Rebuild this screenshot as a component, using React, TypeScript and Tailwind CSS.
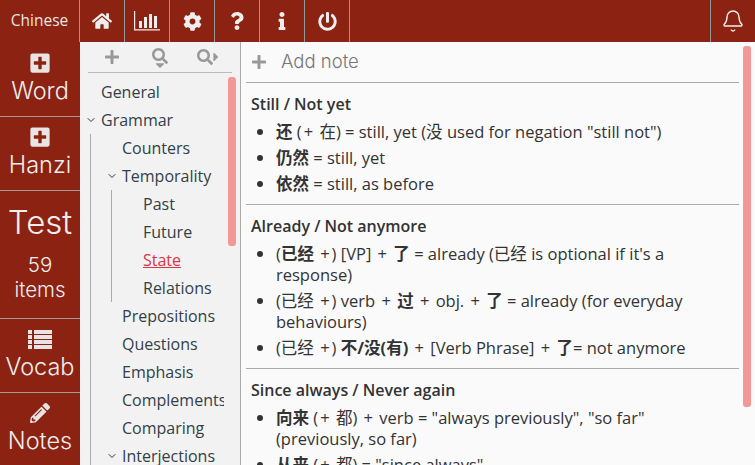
import { FaHome, FaCog, FaQuestion, FaInfo, FaPowerOff, FaPlus, FaPlusSquare, FaPencilAlt, FaSearch, FaCaretDown, FaCaretRight } from 'react-icons/fa';
import { ChevronDown, Bell } from 'lucide-react';
import type { ReactNode } from 'react';

const TITLE = 'font-["Inter","Lato",sans-serif] font-light';

function ChartIcon() {
  return (
    <svg viewBox="0 0 26 20" className="w-[26px] h-5" fill="#eee">
      <path d="M0 0h1.2v18.3H26v1.2H0z" />
      <rect x="5" y="10" width="3" height="7" />
      <rect x="10" y="6" width="3" height="11" />
      <rect x="15" y="3" width="3" height="14" />
      <rect x="20" y="5" width="3" height="12" />
    </svg>
  );
}

function ListIcon() {
  return (
    <svg viewBox="0 0 24 20" className="w-6 h-5" fill="#e8e4e4">
      <path d="M0 1h4v4H0zM6 1h18v4H6zM0 6h4v4H0zM6 6h18v4H6zM0 11h4v4H0zM6 11h18v4H6zM0 16h4v4H0zM6 16h18v4H6z" />
    </svg>
  );
}

// the plus signs sit a little wider apart than a plain space gives
function P() {
  return <span className="mx-[2px]">+</span>;
}

function TopCell({ children }: { children: ReactNode }) {
  return (
    <div className="w-[45px] h-full flex items-center justify-center border-r border-[#8f9a9a] text-[#eeeeee] shrink-0">
      {children}
    </div>
  );
}

function SideButton({ icon, label }: { icon: ReactNode; label: string }) {
  return (
    <div className="h-[74px] shrink-0 flex flex-col items-center border-b border-[#a89a94] pt-[7px]">
      <div className="h-[25px] flex items-center text-[#e8e4e4]">{icon}</div>
      <div className={`${TITLE} text-[23.5px] leading-[30px] mt-px text-[#eee]`}>{label}</div>
    </div>
  );
}

function TreeRow({ label, depth, open, active }: { label: string; depth: number; open?: boolean; active?: boolean }) {
  return (
    <div
      className={`h-7 flex items-center relative whitespace-nowrap ${depth === 0 ? 'pl-[21px]' : depth === 1 ? 'pl-[42px]' : 'pl-[63px]'}`}
    >
      {open && (
        <ChevronDown
          className={`absolute w-3 h-3 text-[#333] ${depth === 0 ? 'left-[5px]' : 'left-[26px]'}`}
          strokeWidth={2}
        />
      )}
      <span className={active ? 'text-[#dc3545] underline' : ''}>{label}</span>
    </div>
  );
}

function TreePanel() {
  return (
    <div className="w-[161px] shrink-0 bg-[#f2f2f2] border-r border-[#a9a9a9] relative overflow-hidden font-['Open_Sans',sans-serif] text-[16px] text-[#343f47]">
      <div className="mx-2 h-[31px] flex items-center border-b border-[#bbb] text-[#999] text-[16px]">
        <div className="w-12 flex justify-center"><FaPlus /></div>
        <div className="w-12 flex flex-col items-center leading-none pt-[6px]">
          <FaSearch className="w-4 h-4" />
          <FaCaretDown className="w-[14px] h-[14px] -mt-[6px]" />
        </div>
        <div className="w-12 flex items-center justify-center pl-1">
          <FaSearch className="w-4 h-4" />
          <FaCaretRight className="w-[14px] h-[14px] -ml-1" />
        </div>
      </div>
      <div className="pt-[5px]">
        <TreeRow label="General" depth={0} />
        <TreeRow label="Grammar" depth={0} open />
        <div className="ml-[10px] border-l border-[#aaa]">
          <div className="-ml-[11px]">
            <TreeRow label="Counters" depth={1} />
            <TreeRow label="Temporality" depth={1} open />
            <div className="ml-[31px] border-l border-[#aaa]">
              <div className="-ml-[32px]">
                <TreeRow label="Past" depth={2} />
                <TreeRow label="Future" depth={2} />
                <TreeRow label="State" depth={2} active />
                <TreeRow label="Relations" depth={2} />
              </div>
            </div>
            <TreeRow label="Prepositions" depth={1} />
            <TreeRow label="Questions" depth={1} />
            <TreeRow label="Emphasis" depth={1} />
            <div className="w-[144px] overflow-hidden">
              <TreeRow label="Complements" depth={1} />
            </div>
            <TreeRow label="Comparing" depth={1} />
            <TreeRow label="Interjections" depth={1} open />
          </div>
        </div>
      </div>
      <div className="absolute left-[148px] top-[35px] w-2 h-[169px] rounded-[3px] bg-[#f49797]" />
    </div>
  );
}

function Section({ title, items, last }: { title: string; items: ReactNode[]; last?: boolean }) {
  return (
    <div className={`mx-[5px] px-[5px] pt-[11px] ${last ? '' : 'pb-[10px] border-b border-[#aaa]'}`}>
      <div className="font-semibold text-[16px] leading-[21px] mb-[6px]">{title}</div>
      <ul className="list-disc pl-[25px] pr-[5px] flex flex-col gap-[5px] text-[16.5px]">
        {items.map((item, i) => (
          <li key={i} className="leading-[21px]">{item}</li>
        ))}
      </ul>
    </div>
  );
}

function NotesPanel() {
  return (
    <div className="flex-1 min-w-0 bg-[#fafafa] relative overflow-hidden font-['Open_Sans','Noto_Sans_CJK_SC',sans-serif] text-[16px] text-[#333]">
      <div className="ml-[5px] mr-[16px] h-[41px] flex items-center border-b border-[#aaa] text-[#777]">
        <FaPlus className="ml-[5px] w-4 h-4 text-[#999]" />
        <span className={`${TITLE} ml-[14px] text-[18.5px]`}>Add note</span>
      </div>
      <div className="mr-[11px]">
        <Section
          title="Still / Not yet"
          items={[
            <><b>还</b> (<P /> 在) = still, yet (没 used for negation "still not")</>,
            <><b>仍然</b> = still, yet</>,
            <><b>依然</b> = still, as before</>,
          ]}
        />
        <Section
          title="Already / Not anymore"
          items={[
            <>(<b>已经</b> <P />) [VP] <P /> <b>了</b> = already (已经 is optional if it's a response)</>,
            <>(已经 <P />) verb <P /> <b>过</b> <P /> obj. <P /> <b>了</b> = already (for everyday behaviours)</>,
            <>(已经 <P />) <b>不/没(有)</b> <P /> [Verb Phrase] <P /> <b>了</b>= not anymore</>,
          ]}
        />
        <Section
          title="Since always / Never again"
          last
          items={[
            <><b>向来</b> (<P /> 都) <P /> verb = "always previously", "so far" (previously, so far)</>,
            <><b>从来</b> (<P /> 都) = "since always"</>,
          ]}
        />
      </div>
      <div className="absolute right-[4px] top-[4px] w-2 h-[361px] rounded-[3px] bg-[#f49797]" />
    </div>
  );
}

export default function App() {
  return (
    <div className="w-[755px] h-[465px] flex flex-col overflow-hidden bg-[#8c2211]">
      <div className="h-[42px] shrink-0 flex items-stretch bg-[#8c2211]">
        <div className="w-[80px] flex items-center justify-center border-r border-[#8f9a9a] font-['Open_Sans',sans-serif] text-[#e8e4e4] text-[15.5px] shrink-0">
          Chinese
        </div>
        <TopCell><FaHome className="w-5 h-5" /></TopCell>
        <TopCell><ChartIcon /></TopCell>
        <TopCell><FaCog className="w-[19px] h-[19px]" /></TopCell>
        <TopCell><FaQuestion className="w-[14px] h-[18px]" /></TopCell>
        <TopCell><FaInfo className="w-[14px] h-[18px]" /></TopCell>
        <TopCell><FaPowerOff className="w-[19px] h-[19px]" /></TopCell>
        <div className="flex-1" />
        <div className="w-[45px] flex items-center justify-center border-l border-[#8f9a9a] text-[#eee]">
          <Bell className="w-6 h-6" strokeWidth={1.4} />
        </div>
      </div>
      <div className="flex-1 min-h-0 flex">
        <div className="w-[80px] shrink-0 flex flex-col overflow-hidden pt-px">
          <SideButton icon={<FaPlusSquare className="w-[22px] h-[22px]" />} label="Word" />
          <SideButton icon={<FaPlusSquare className="w-[22px] h-[22px]" />} label="Hanzi" />
          <div className="h-[128px] shrink-0 flex flex-col items-center border-b border-[#a89a94] text-[#eee]">
            <div className={`${TITLE} text-[33px] leading-[40px] mt-[11px]`}>Test</div>
            <div className={`${TITLE} text-[20.5px] leading-[25px] mt-[10px] text-center`}>59<br />items</div>
          </div>
          <SideButton icon={<ListIcon />} label="Vocab" />
          <SideButton icon={<FaPencilAlt className="w-5 h-5" />} label="Notes" />
        </div>
        <TreePanel />
        <NotesPanel />
      </div>
    </div>
  );
}
